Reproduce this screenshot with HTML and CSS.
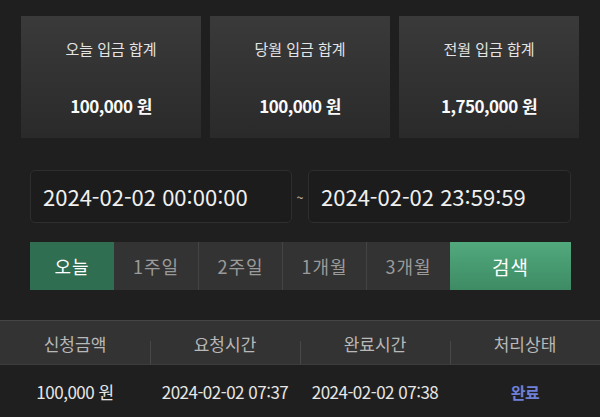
FILE: index.html
```html
<!DOCTYPE html>
<html lang="ko">
<head>
<meta charset="utf-8">
<link rel="stylesheet" href="styles.css">
</head>
<body>
<div class="summary">
  <div class="card"><div class="card-title">오늘 입금 합계</div><div class="card-value">100,000 원</div></div>
  <div class="card"><div class="card-title">당월 입금 합계</div><div class="card-value">100,000 원</div></div>
  <div class="card"><div class="card-title">전월 입금 합계</div><div class="card-value">1,750,000 원</div></div>
</div>
<div class="range">
  <div class="date-input">2024-02-02 00:00:00</div>
  <div class="tilde">~</div>
  <div class="date-input wide">2024-02-02 23:59:59</div>
</div>
<div class="periods">
  <div class="period active">오늘</div>
  <div class="period">1주일</div>
  <div class="period">2주일</div>
  <div class="period">1개월</div>
  <div class="period">3개월</div>
  <div class="period search">검색</div>
</div>
<div class="table">
  <div class="thead">
    <div class="th">신청금액</div>
    <div class="th sep">요청시간</div>
    <div class="th sep">완료시간</div>
    <div class="th sep">처리상태</div>
  </div>
  <div class="trow">
    <div class="td">100,000 원</div>
    <div class="td">2024-02-02 07:37</div>
    <div class="td">2024-02-02 07:38</div>
    <div class="td done">완료</div>
  </div>
</div>
</body>
</html>
```
FILE: styles.css
```css
* { box-sizing: border-box; }
html, body {
  margin: 0;
  padding: 0;
  background: #1f1f1f;
  font-family: "Noto Sans CJK KR", "Noto Sans", sans-serif;
  width: 600px;
  height: 417px;
  overflow: hidden;
}
.summary {
  display: flex;
  gap: 9px;
  padding: 16px 0 0 21px;
}
.card {
  width: 180px;
  height: 122px;
  background: linear-gradient(#3a3a3a, #2a2a2a);
  display: flex;
  flex-direction: column;
  align-items: center;
  padding-top: 22px;
}
.card-title {
  font-size: 15px;
  color: #e4e4e4;
  line-height: 21px;
}
.card-value {
  margin-top: 35px;
  font-size: 17px;
  font-weight: bold;
  color: #fafafa;
  line-height: 24px;
  letter-spacing: -0.5px;
}
.range {
  display: flex;
  align-items: center;
  padding-left: 30px;
  margin-top: 32px;
}
.date-input {
  width: 262px;
  height: 53px;
  border: 1px solid #2e2e2e;
  border-radius: 5px;
  background: #1c1c1c;
  color: #f0f0f0;
  font-size: 22px;
  line-height: 51px;
  padding-left: 12px;
}
.date-input.wide { width: 263px; }
.tilde {
  width: 16px;
  text-align: center;
  color: #d0d0d0;
  font-size: 12px;
}
.periods {
  display: flex;
  padding-left: 30px;
  margin-top: 19px;
  height: 48px;
}
.period {
  width: 84px;
  height: 48px;
  background: #333333;
  color: #9a9a9a;
  font-size: 18px;
  letter-spacing: 1px;
  display: flex;
  align-items: center;
  justify-content: center;
  border-left: 1px solid #444444;
}
.period.active {
  background: #2f6e50;
  color: #ffffff;
  border-left: none;
}
.period.active + .period { border-left: none; }
.period.search {
  width: 121px;
  background: linear-gradient(#52a97d, #3d8b64);
  color: #ffffff;
  border-left: none;
  font-size: 19px;
}
.table {
  margin-top: 30px;
}
.thead {
  display: flex;
  height: 45px;
  background: #333333;
  border-top: 1px solid #454545;
  border-bottom: 1px solid #3c3c3c;
}
.th {
  flex: 1;
  position: relative;
  text-align: center;
  color: #b8b8b8;
  font-size: 17px;
  line-height: 46px;
}
.th.sep::before {
  content: "";
  position: absolute;
  left: 0;
  top: 20px;
  bottom: 0;
  width: 1px;
  background: #484848;
}
.trow {
  display: flex;
  height: 52px;
}
.td {
  flex: 1;
  text-align: center;
  color: #e6e6e6;
  font-size: 17px;
  line-height: 54px;
  letter-spacing: -0.5px;
}
.td.done {
  color: #6f80d8;
  font-weight: bold;
  font-size: 16px;
}
```
